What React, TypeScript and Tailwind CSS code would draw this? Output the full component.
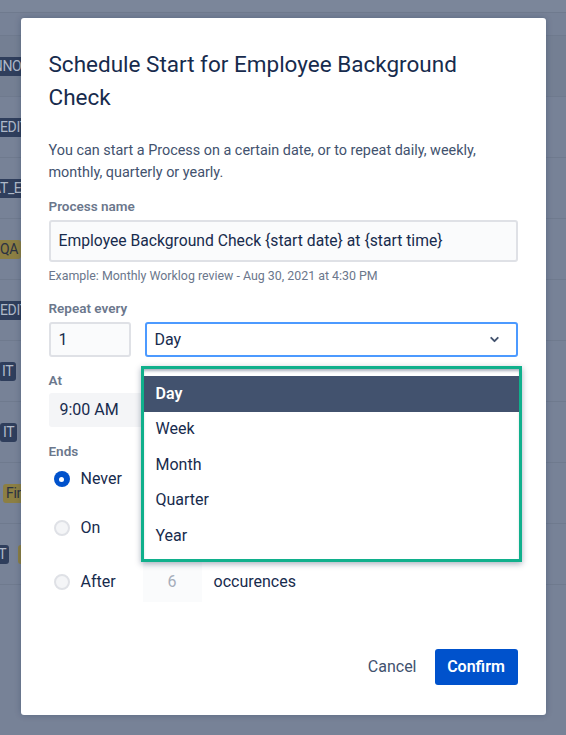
import { ChevronDown } from "lucide-react";

const rows = [
  { text: "ANNO", kind: "navy", shift: "-ml-[19px]" },
  { text: "EDIT", kind: "navy", shift: "-ml-[3px]" },
  { text: "AT_EX", kind: "navy", shift: "-ml-[11px]" },
  { text: "QA", kind: "yellow", shift: "-ml-[3px]" },
  { text: "EDIT", kind: "navy", shift: "-ml-[3px]" },
  { text: "IT", kind: "navy", shift: "-ml-[1px]" },
  { text: "IT", kind: "navy", shift: "ml-0" },
  { text: "Fin", kind: "yellow", shift: "ml-[3px]" },
  { text: "IT", kind: "navy", shift: "-ml-[8px]" },
];

const options = ["Day", "Week", "Month", "Quarter", "Year"];

function Radio({ checked }: { checked?: boolean }) {
  return checked ? (
    <span className="w-[16px] h-[16px] rounded-full bg-[#0052cc] flex items-center justify-center">
      <span className="w-[5px] h-[5px] rounded-full bg-white" />
    </span>
  ) : (
    <span className="w-[16px] h-[16px] rounded-full bg-[#f4f5f7] border-2 border-[#dfe1e6]" />
  );
}

export default function App() {
  return (
    <div
      className="relative w-[566px] h-[735px] overflow-hidden bg-[#778297]"
      style={{ fontFamily: "Roboto, 'Noto Sans', sans-serif" }}
    >
      {/* dimmed page underneath */}
      <div className="flex flex-col">
        <div className="h-[13px] bg-[#7b869a] border-b border-[#6f7a8e]" />
        <div className="h-[23px] border-b border-[#6f7a8e]" />
        {rows.map((r, i) => (
          <div
            key={i}
            className={`h-[61px] flex items-center border-b border-[#6f7a8e] ${
              i === 0 ? "bg-[#747f93]" : ""
            }`}
          >
            <div className="w-[40px] overflow-hidden flex">
              <span
                className={`${r.shift} shrink-0 px-[3px] h-[19px] rounded-[3px] flex items-center text-[14px] tracking-tight leading-none ${
                  r.kind === "navy"
                    ? "bg-[#2f3e5c] text-[#aeb8c8]"
                    : "bg-[#8c7f43] text-[#2b3242]"
                }`}
              >
                {r.text}
              </span>
              {i === 8 && (
                <span className="ml-[9px] shrink-0 w-[20px] h-[19px] rounded-[3px] bg-[#8c7f43]" />
              )}
            </div>
          </div>
        ))}
      </div>

      {/* modal */}
      <div className="absolute inset-0 flex justify-center pt-[18px]">
        <div className="relative w-[525px] h-[697px] bg-white rounded-[3px] shadow-[0_0_6px_rgba(9,30,66,0.25)] px-[28px] pt-[30px] flex flex-col">
          <h1 className="text-[22.5px] leading-[33px] font-normal text-[#172b4d] pr-[40px]">
            Schedule Start for Employee Background Check
          </h1>
          <p className="mt-[26px] text-[14.4px] leading-[22px] text-[#42526e]">
            You can start a Process on a certain date, or to repeat daily, weekly,
            monthly, quarterly or yearly.
          </p>

          <label className="mt-[14px] text-[13.5px] leading-[16px] font-semibold text-[#6b778c]">
            Process name
          </label>
          <div className="mt-[6px] h-[42px] bg-[#fafbfc] border-2 border-[#dfe1e6] rounded-[3px] flex items-center px-[8px] text-[15.7px] text-[#172b4d]">
            Employee Background Check {"{start date}"} at {"{start time}"}
          </div>
          <div className="mt-[6px] text-[12.4px] leading-[16px] text-[#6b778c]">
            Example: Monthly Worklog review - Aug 30, 2021 at 4:30 PM
          </div>

          <label className="mt-[16px] text-[13.5px] leading-[16px] font-semibold text-[#6b778c]">
            Repeat every
          </label>
          <div className="mt-[6px] flex gap-[14px]">
            <div className="w-[82px] h-[35px] bg-[#fafbfc] border-2 border-[#dfe1e6] rounded-[3px] flex items-center px-[8px] text-[16px] text-[#172b4d]">
              1
            </div>
            <div className="flex-1 h-[35px] bg-white border-2 border-[#4c9aff] rounded-[3px] flex items-center justify-between pl-[8px] pr-[15px] text-[16px] text-[#172b4d]">
              Day
              <ChevronDown size={13} strokeWidth={3.5} className="text-[#42526e]" />
            </div>
          </div>

          <label className="mt-[15px] text-[13.5px] leading-[16px] font-semibold text-[#6b778c]">
            At
          </label>
          <div className="mt-[5px] w-[120px] h-[34px] bg-[#f4f5f7] rounded-[3px] flex items-center px-[11px] text-[16px] text-[#172b4d]">
            9:00 AM
          </div>

          <label className="mt-[16px] text-[13.5px] leading-[16px] font-semibold text-[#6b778c]">
            Ends
          </label>
          <div className="mt-[2px] flex flex-col">
            <div className="h-[36px] flex items-center gap-[11px] pl-[5px] text-[16px] text-[#172b4d]">
              <Radio checked />
              Never
            </div>
            <div className="mt-[13px] h-[36px] flex items-center gap-[11px] pl-[5px] text-[16px] text-[#172b4d]">
              <Radio />
              On
            </div>
            <div className="mt-[16px] h-[40px] flex items-center pl-[5px] text-[16px] text-[#172b4d]">
              <Radio />
              <span className="ml-[11px] w-[62px]">After</span>
              <span className="w-[59px] h-[40px] bg-[#fafbfc] flex items-center justify-center text-[#a5adba]">
                6
              </span>
              <span className="ml-[12px]">occurences</span>
            </div>
          </div>

          <div className="mt-auto mb-[30px] flex justify-end items-center gap-[18px]">
            <button className="text-[16px] text-[#42526e]">Cancel</button>
            <button className="h-[36px] w-[83px] rounded-[3px] bg-[#0052cc] text-white text-[16px] font-semibold flex items-center justify-center">
              Confirm
            </button>
          </div>

          {/* open dropdown */}
          <div className="absolute left-[120px] top-[348px] w-[381px] h-[196px] border-[3px] border-[#10b08c] shadow-[0_2px_6px_rgba(9,30,66,0.35)] bg-white">
            <div className="h-full bg-white shadow-[inset_0_3px_3px_-1px_rgba(9,30,66,0.35)] pt-[7px] flex flex-col">
              {options.map((o, i) => (
                <div
                  key={o}
                  className={`h-[35.5px] flex items-center px-[12px] text-[16px] ${
                    i === 0
                      ? "bg-[#42526e] text-white font-semibold"
                      : "text-[#172b4d]"
                  }`}
                >
                  {o}
                </div>
              ))}
            </div>
          </div>
        </div>
      </div>
    </div>
  );
}
